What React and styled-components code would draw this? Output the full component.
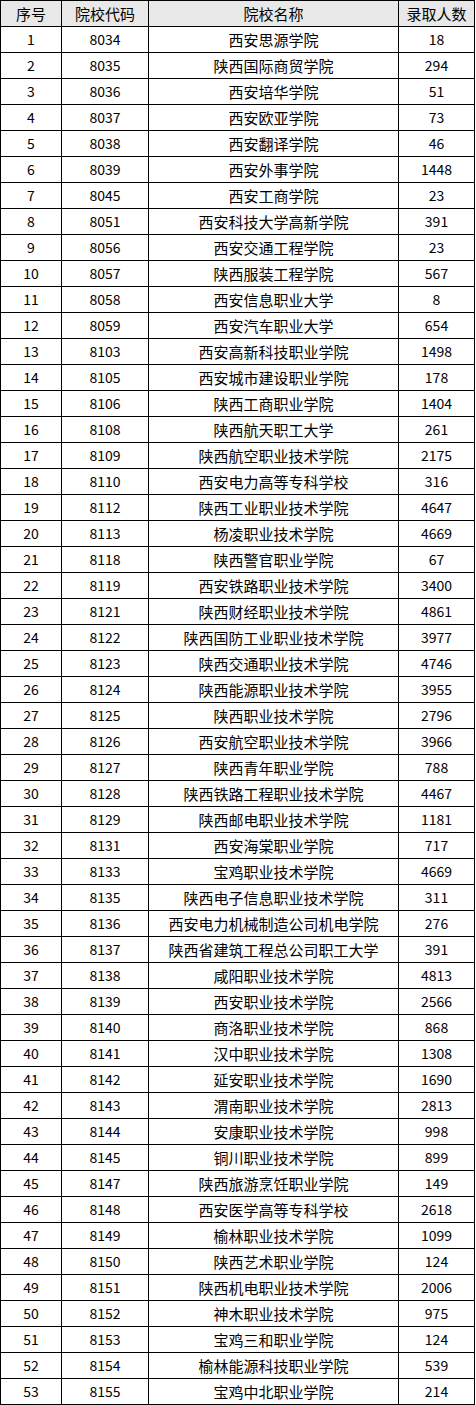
import styled, { createGlobalStyle } from "styled-components";

const GlobalStyle = createGlobalStyle`
  body {
    margin: 0;
    background: #ffffff;
    font-family: "Noto Sans CJK SC", "Noto Sans", sans-serif;
  }
`;

const ROWS = [
  ["8034", "西安思源学院", "18"],
  ["8035", "陕西国际商贸学院", "294"],
  ["8036", "西安培华学院", "51"],
  ["8037", "西安欧亚学院", "73"],
  ["8038", "西安翻译学院", "46"],
  ["8039", "西安外事学院", "1448"],
  ["8045", "西安工商学院", "23"],
  ["8051", "西安科技大学高新学院", "391"],
  ["8056", "西安交通工程学院", "23"],
  ["8057", "陕西服装工程学院", "567"],
  ["8058", "西安信息职业大学", "8"],
  ["8059", "西安汽车职业大学", "654"],
  ["8103", "西安高新科技职业学院", "1498"],
  ["8105", "西安城市建设职业学院", "178"],
  ["8106", "陕西工商职业学院", "1404"],
  ["8108", "陕西航天职工大学", "261"],
  ["8109", "陕西航空职业技术学院", "2175"],
  ["8110", "西安电力高等专科学校", "316"],
  ["8112", "陕西工业职业技术学院", "4647"],
  ["8113", "杨凌职业技术学院", "4669"],
  ["8118", "陕西警官职业学院", "67"],
  ["8119", "西安铁路职业技术学院", "3400"],
  ["8121", "陕西财经职业技术学院", "4861"],
  ["8122", "陕西国防工业职业技术学院", "3977"],
  ["8123", "陕西交通职业技术学院", "4746"],
  ["8124", "陕西能源职业技术学院", "3955"],
  ["8125", "陕西职业技术学院", "2796"],
  ["8126", "西安航空职业技术学院", "3966"],
  ["8127", "陕西青年职业学院", "788"],
  ["8128", "陕西铁路工程职业技术学院", "4467"],
  ["8129", "陕西邮电职业技术学院", "1181"],
  ["8131", "西安海棠职业学院", "717"],
  ["8133", "宝鸡职业技术学院", "4669"],
  ["8135", "陕西电子信息职业技术学院", "311"],
  ["8136", "西安电力机械制造公司机电学院", "276"],
  ["8137", "陕西省建筑工程总公司职工大学", "391"],
  ["8138", "咸阳职业技术学院", "4813"],
  ["8139", "西安职业技术学院", "2566"],
  ["8140", "商洛职业技术学院", "868"],
  ["8141", "汉中职业技术学院", "1308"],
  ["8142", "延安职业技术学院", "1690"],
  ["8143", "渭南职业技术学院", "2813"],
  ["8144", "安康职业技术学院", "998"],
  ["8145", "铜川职业技术学院", "899"],
  ["8147", "陕西旅游烹饪职业学院", "149"],
  ["8148", "西安医学高等专科学校", "2618"],
  ["8149", "榆林职业技术学院", "1099"],
  ["8150", "陕西艺术职业学院", "124"],
  ["8151", "陕西机电职业技术学院", "2006"],
  ["8152", "神木职业技术学院", "975"],
  ["8153", "宝鸡三和职业学院", "124"],
  ["8154", "榆林能源科技职业学院", "539"],
  ["8155", "宝鸡中北职业学院", "214"],
];

const COLUMNS = [
  { title: "序号", width: 60 },
  { title: "院校代码", width: 86 },
  { title: "院校名称", width: 249 },
  { title: "录取人数", width: 75 },
];

const Sheet = styled.table`
  width: 475px;
  table-layout: fixed;
  border-collapse: separate;
  border-spacing: 1px;
  background: #000000;
  color: #000000;
  font-size: 15px;
`;

const HeadCell = styled.th`
  height: 25px;
  padding: 0;
  background: #e8e8e8;
  font-weight: 400;
  text-align: center;
  line-height: 25px;
  white-space: nowrap;
`;

const Cell = styled.td`
  height: 25px;
  padding: 0;
  background: #ffffff;
  text-align: center;
  line-height: 25px;
  white-space: nowrap;
  overflow: hidden;
  font-size: ${(p) => (p.$num ? "14px" : "15px")};
`;

export default function App() {
  return (
    <>
      <GlobalStyle />
      <Sheet>
        <colgroup>
          {COLUMNS.map((c) => (
            <col key={c.title} style={{ width: c.width }} />
          ))}
        </colgroup>
        <thead>
          <tr>
            {COLUMNS.map((c) => (
              <HeadCell key={c.title}>{c.title}</HeadCell>
            ))}
          </tr>
        </thead>
        <tbody>
          {ROWS.map(([code, name, count], i) => (
            <tr key={code}>
              <Cell $num>{i + 1}</Cell>
              <Cell $num>{code}</Cell>
              <Cell>{name}</Cell>
              <Cell $num>{count}</Cell>
            </tr>
          ))}
        </tbody>
      </Sheet>
    </>
  );
}
